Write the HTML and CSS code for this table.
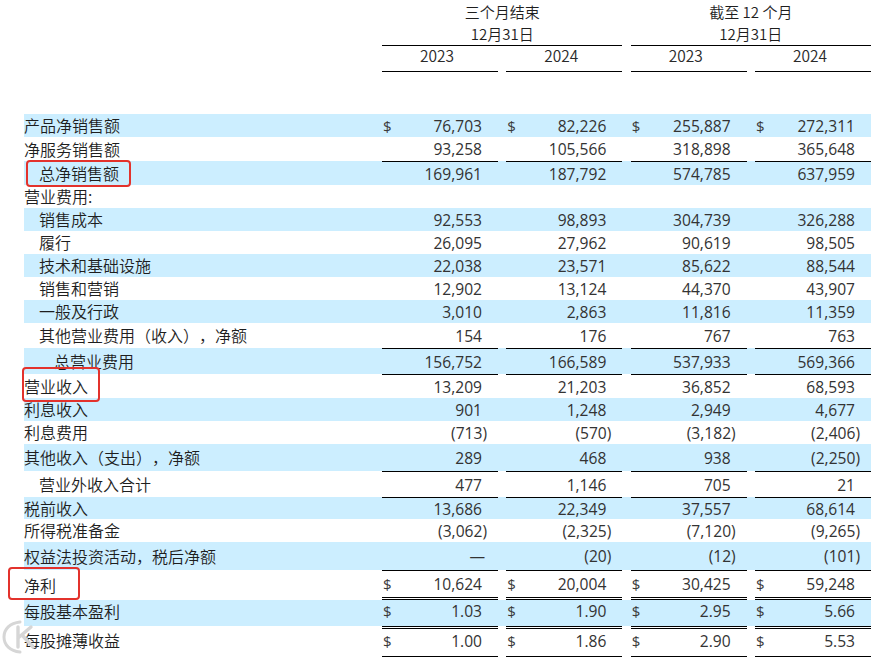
FILE: index.html
```html
<!DOCTYPE html>
<html lang="zh">
<head>
<meta charset="utf-8">
<title>利润表</title>
<link rel="stylesheet" href="styles.css">
</head>
<body>
<div class="page">
  <div class="head">
    <div class="head-spacer"></div>
    <div class="group">
      <div class="gtitle"><div>三个月结束</div><div>12月31日</div></div>
      <div class="years"><div class="yr">2023</div><div class="yr">2024</div></div>
    </div>
    <div class="group">
      <div class="gtitle"><div>截至 12 个月</div><div>12月31日</div></div>
      <div class="years"><div class="yr">2023</div><div class="yr">2024</div></div>
    </div>
  </div>

  <div class="table">
    <div class="row blue h23">
      <div class="label">产品净销售额</div>
      <div class="v"><span class="cur">$</span><span class="num">76,703</span></div>
      <div class="v"><span class="cur">$</span><span class="num">82,226</span></div>
      <div class="v"><span class="cur">$</span><span class="num">255,887</span></div>
      <div class="v"><span class="cur">$</span><span class="num">272,311</span></div>
    </div>
    <div class="row h24">
      <div class="label">净服务销售额</div>
      <div class="v"><span class="num">93,258</span></div>
      <div class="v"><span class="num">105,566</span></div>
      <div class="v"><span class="num">318,898</span></div>
      <div class="v"><span class="num">365,648</span></div>
    </div>
    <div class="row blue h24 line">
      <div class="label ind1">总净销售额</div>
      <div class="v"><span class="num">169,961</span></div>
      <div class="v"><span class="num">187,792</span></div>
      <div class="v"><span class="num">574,785</span></div>
      <div class="v"><span class="num">637,959</span></div>
    </div>
    <div class="row h23">
      <div class="label">营业费用:</div>
    </div>
    <div class="row blue h23">
      <div class="label ind1">销售成本</div>
      <div class="v"><span class="num">92,553</span></div>
      <div class="v"><span class="num">98,893</span></div>
      <div class="v"><span class="num">304,739</span></div>
      <div class="v"><span class="num">326,288</span></div>
    </div>
    <div class="row h23">
      <div class="label ind1">履行</div>
      <div class="v"><span class="num">26,095</span></div>
      <div class="v"><span class="num">27,962</span></div>
      <div class="v"><span class="num">90,619</span></div>
      <div class="v"><span class="num">98,505</span></div>
    </div>
    <div class="row blue h23">
      <div class="label ind1">技术和基础设施</div>
      <div class="v"><span class="num">22,038</span></div>
      <div class="v"><span class="num">23,571</span></div>
      <div class="v"><span class="num">85,622</span></div>
      <div class="v"><span class="num">88,544</span></div>
    </div>
    <div class="row h23">
      <div class="label ind1">销售和营销</div>
      <div class="v"><span class="num">12,902</span></div>
      <div class="v"><span class="num">13,124</span></div>
      <div class="v"><span class="num">44,370</span></div>
      <div class="v"><span class="num">43,907</span></div>
    </div>
    <div class="row blue h23">
      <div class="label ind1">一般及行政</div>
      <div class="v"><span class="num">3,010</span></div>
      <div class="v"><span class="num">2,863</span></div>
      <div class="v"><span class="num">11,816</span></div>
      <div class="v"><span class="num">11,359</span></div>
    </div>
    <div class="row h25">
      <div class="label ind1">其他营业费用（收入），净额</div>
      <div class="v"><span class="num">154</span></div>
      <div class="v"><span class="num">176</span></div>
      <div class="v"><span class="num">767</span></div>
      <div class="v"><span class="num">763</span></div>
    </div>
    <div class="row blue h26 line">
      <div class="label ind2">总营业费用</div>
      <div class="v"><span class="num">156,752</span></div>
      <div class="v"><span class="num">166,589</span></div>
      <div class="v"><span class="num">537,933</span></div>
      <div class="v"><span class="num">569,366</span></div>
    </div>
    <div class="row h24 line">
      <div class="label">营业收入</div>
      <div class="v"><span class="num">13,209</span></div>
      <div class="v"><span class="num">21,203</span></div>
      <div class="v"><span class="num">36,852</span></div>
      <div class="v"><span class="num">68,593</span></div>
    </div>
    <div class="row blue h23">
      <div class="label">利息收入</div>
      <div class="v"><span class="num">901</span></div>
      <div class="v"><span class="num">1,248</span></div>
      <div class="v"><span class="num">2,949</span></div>
      <div class="v"><span class="num">4,677</span></div>
    </div>
    <div class="row h23">
      <div class="label">利息费用</div>
      <div class="v"><span class="num neg">(713)</span></div>
      <div class="v"><span class="num neg">(570)</span></div>
      <div class="v"><span class="num neg">(3,182)</span></div>
      <div class="v"><span class="num neg">(2,406)</span></div>
    </div>
    <div class="row blue h27">
      <div class="label">其他收入（支出），净额</div>
      <div class="v"><span class="num">289</span></div>
      <div class="v"><span class="num">468</span></div>
      <div class="v"><span class="num">938</span></div>
      <div class="v"><span class="num neg">(2,250)</span></div>
    </div>
    <div class="row h26 line">
      <div class="label ind1">营业外收入合计</div>
      <div class="v"><span class="num">477</span></div>
      <div class="v"><span class="num">1,146</span></div>
      <div class="v"><span class="num">705</span></div>
      <div class="v"><span class="num">21</span></div>
    </div>
    <div class="row blue h22 line">
      <div class="label">税前收入</div>
      <div class="v"><span class="num">13,686</span></div>
      <div class="v"><span class="num">22,349</span></div>
      <div class="v"><span class="num">37,557</span></div>
      <div class="v"><span class="num">68,614</span></div>
    </div>
    <div class="row h23">
      <div class="label">所得税准备金</div>
      <div class="v"><span class="num neg">(3,062)</span></div>
      <div class="v"><span class="num neg">(2,325)</span></div>
      <div class="v"><span class="num neg">(7,120)</span></div>
      <div class="v"><span class="num neg">(9,265)</span></div>
    </div>
    <div class="row blue h28">
      <div class="label">权益法投资活动，税后净额</div>
      <div class="v"><span class="num dash">—</span></div>
      <div class="v"><span class="num neg">(20)</span></div>
      <div class="v"><span class="num neg">(12)</span></div>
      <div class="v"><span class="num neg">(101)</span></div>
    </div>
    <div class="row h30 line dbl-bottom">
      <div class="label">净利</div>
      <div class="v"><span class="cur">$</span><span class="num">10,624</span></div>
      <div class="v"><span class="cur">$</span><span class="num">20,004</span></div>
      <div class="v"><span class="cur">$</span><span class="num">30,425</span></div>
      <div class="v"><span class="cur">$</span><span class="num">59,248</span></div>
    </div>
    <div class="row blue h26 lift">
      <div class="label">每股基本盈利</div>
      <div class="v"><span class="cur">$</span><span class="num">1.03</span></div>
      <div class="v"><span class="cur">$</span><span class="num">1.90</span></div>
      <div class="v"><span class="cur">$</span><span class="num">2.95</span></div>
      <div class="v"><span class="cur">$</span><span class="num">5.66</span></div>
    </div>
    <div class="row h31 dbl-top line-bottom lift">
      <div class="label">每股摊薄收益</div>
      <div class="v"><span class="cur">$</span><span class="num">1.00</span></div>
      <div class="v"><span class="cur">$</span><span class="num">1.86</span></div>
      <div class="v"><span class="cur">$</span><span class="num">2.90</span></div>
      <div class="v"><span class="cur">$</span><span class="num">5.53</span></div>
    </div>
  </div>

  <div class="mark mark-1"></div>
  <div class="mark mark-2"></div>
  <div class="mark mark-3"></div>

  <svg class="watermark" width="44" height="36" viewBox="0 0 44 36" aria-hidden="true">
    <path d="M20 3 C10 4 4 10 4 18 C4 26 10 32 20 33" fill="none" stroke="#d6d6d6" stroke-width="3" stroke-linecap="round"/>
    <path d="M18 8 L18 28 M18 19 L31 8 M22 16 L33 28" fill="none" stroke="#d6d6d6" stroke-width="3.4" stroke-linecap="round" stroke-linejoin="round"/>
  </svg>
</div>
</body>
</html>
```

FILE: styles.css
```css
* { box-sizing: border-box; }

html, body {
  margin: 0;
  padding: 0;
  background: #ffffff;
}

body {
  font-family: "Noto Sans CJK SC", "Noto Sans", sans-serif;
  font-size: 16px;
  font-weight: 350;
  color: #1e1e1e;
  text-spacing-trim: space-all;
}

.page {
  position: relative;
  width: 877px;
  height: 657px;
  overflow: hidden;
  padding-left: 24px;
}

/* ---------- header ---------- */
.head {
  display: flex;
  height: 114px;
}

.head-spacer {
  flex: 0 0 358px;
}

.group {
  flex: 0 0 240.33px;
  display: flex;
  flex-direction: column;
}

.group + .group {
  margin-left: 8.33px;
}

.gtitle {
  padding-top: 1px;
  height: 46px;
  font-size: 15px;
  line-height: 22px;
  text-align: center;
  border-bottom: 1px solid #000;
  color: #1e1e1e;
}

.years {
  display: flex;
  justify-content: space-between;
}

.yr {
  flex: 0 0 116px;
  height: 26px;
  font-size: 15.5px;
  line-height: 18px;
  text-align: center;
  padding-right: 6px;
  border-bottom: 1px solid #000;
  color: #2a2a2a;
}

/* ---------- table ---------- */
.table {
  width: 847px;
  display: flex;
  flex-direction: column;
}

.row {
  display: flex;
  align-items: stretch;
}

.row.blue { background: #cceeff; }

.h22 { height: 22px; }
.h23 { height: 23px; }
.h24 { height: 24px; }
.h25 { height: 25px; }
.h26 { height: 26px; }
.h27 { height: 27px; }
.h28 { height: 28px; }
.h30 { height: 30px; }
.h31 { height: 31px; }

.label {
  flex: 0 0 358px;
  display: flex;
  align-items: center;
  white-space: nowrap;
  line-height: 20px;
  padding-bottom: 1px;
  color: #1e1e1e;
}

.label.ind1 { padding-left: 15px; }
.label.ind2 { padding-left: 30px; }

.v {
  flex: 0 0 116px;
  display: flex;
  align-items: center;
  padding: 0 16px 0 1px;
  font-family: "Open Sans", "Liberation Sans", sans-serif;
  font-weight: 400;
  font-size: 15.6px;
  color: #333333;
  line-height: 18px;
}

.v + .v { margin-left: 8.33px; }

.line .v { border-top: 1px solid #000; }
.dbl-bottom .v { border-bottom: 3px double #000; }
.dbl-top .v { border-top: 3px double #000; }
.line-bottom .v { border-bottom: 1px solid #000; }

.lift .v,
.lift .label { padding-bottom: 4px; }

.cur {
  font-size: 15px;
  color: #3a3a3a;
}

.num { margin-left: auto; }
.num.neg { margin-right: -5px; }
.num.dash { margin-right: -3px; }

/* ---------- overlays ---------- */
.mark {
  position: absolute;
  border: 2px solid #e3322c;
  border-radius: 4px;
}

.mark-1 { left: 26px; top: 160px; width: 105px; height: 27px; }
.mark-2 { left: 22px; top: 367px; width: 78px; height: 35px; }
.mark-3 { left: 8px; top: 567px; width: 72px; height: 33px; }

.watermark {
  position: absolute;
  left: 0;
  top: 619px;
}
```
